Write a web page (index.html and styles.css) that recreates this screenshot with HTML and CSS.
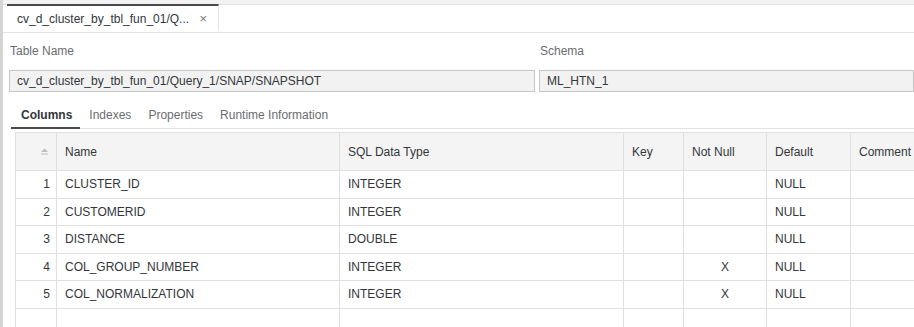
FILE: index.html
```html
<!DOCTYPE html>
<html>
<head>
	<title>Table Definition</title>
	<link rel="stylesheet" href="styles.css">
</head>
<body>
<div class="app">
  <div class="splitter"></div>
  <div class="main">
    <div class="strip"></div>
    <div class="tabbar">
      <div class="tab">
        <span>cv_d_cluster_by_tbl_fun_01/Q...</span>
        <a class="close">&#215;</a>
      </div>
    </div>
    <div class="form">
      <div class="field wide">
        <label>Table Name</label>
        <div class="input">cv_d_cluster_by_tbl_fun_01/Query_1/SNAP/SNAPSHOT</div>
      </div>
      <div class="field">
        <label>Schema</label>
        <div class="input">ML_HTN_1</div>
      </div>
    </div>
    <div class="subtabs">
      <a class="on">Columns</a>
      <a>Indexes</a>
      <a>Properties</a>
      <a>Runtime Information</a>
    </div>
    <div class="grid">
      <table>
        <colgroup>
          <col style="width:41px"><col style="width:283px"><col style="width:284px"><col style="width:60px"><col style="width:83px"><col style="width:84px"><col style="width:84px">
        </colgroup>
        <thead>
          <tr>
            <th class="num"><svg width="9" height="8" viewBox="0 0 9 8"><path d="M4.5 0.5 L8 4 L1 4 Z" fill="#bdbdbd"/><rect x="1" y="5.5" width="7" height="1" fill="#bdbdbd"/></svg></th>
            <th>Name</th><th>SQL Data Type</th><th>Key</th><th>Not Null</th><th>Default</th><th>Comment</th>
          </tr>
        </thead>
        <tbody>
          <tr><td class="num">1</td><td>CLUSTER_ID</td><td>INTEGER</td><td></td><td class="x"></td><td>NULL</td><td></td></tr>
          <tr><td class="num">2</td><td>CUSTOMERID</td><td>INTEGER</td><td></td><td class="x"></td><td>NULL</td><td></td></tr>
          <tr><td class="num">3</td><td>DISTANCE</td><td>DOUBLE</td><td></td><td class="x"></td><td>NULL</td><td></td></tr>
          <tr><td class="num">4</td><td>COL_GROUP_NUMBER</td><td>INTEGER</td><td></td><td class="x">X</td><td>NULL</td><td></td></tr>
          <tr><td class="num">5</td><td>COL_NORMALIZATION</td><td>INTEGER</td><td></td><td class="x">X</td><td>NULL</td><td></td></tr>
          <tr><td class="num"></td><td></td><td></td><td></td><td class="x"></td><td></td><td></td></tr>
        </tbody>
      </table>
    </div>
  </div>
</div>
</body>
</html>
```
FILE: styles.css
```css
html,body{margin:0;padding:0;}
body{
  font-family: "Liberation Sans", Arial, sans-serif;
  font-size: 12px;
  color: #32363a;
  background: #fff;
  overflow: hidden;
}
.app{
  display: flex;
  height: 327px;
}
.splitter{
  width: 3px;
  background: #d4d4d4;
  flex: none;
}
.main{
  flex: 1;
  min-width: 0;
}
.strip{
  height: 4px;
  background: #f2f2f2;
  border-bottom: 1px solid #e2e2e2;
}
.tabbar{
  height: 27px;
  border-bottom: 1px solid #e4e4e4;
  padding-left: 4px;
  display: flex;
}
.tab{
  width: 201px;
  border-top: 2px solid #4a4a4a;
  border-right: 1px solid #e4e4e4;
  padding-left: 10px;
  display: flex;
  align-items: center;
  height: 25px;
  margin-top: -1px;
}
.tab span{
  flex: 1;
}
.close{
  color: #777;
  font-size: 13px;
  margin-right: 11px;
}
.form{
  display: flex;
  gap: 4px;
  padding: 11px 0 0 6px;
}
.field{
  flex: 1;
  display: flex;
  flex-direction: column;
}
.field.wide{
  flex: none;
  width: 526px;
}
.field label{
  color: #6a6d70;
  padding-left: 1px;
  height: 26px;
}
.input{
  height: 20px;
  line-height: 20px;
  border: 1px solid #c6c6c6;
  background: #f2f2f2;
  padding-left: 7px;
  white-space: nowrap;
}
.subtabs{
  margin: 10px 0 0 8px;
  display: flex;
  border-bottom: 1px solid #e2e2e2;
  height: 26px;
}
.subtabs a{
  color: #6a6d70;
  padding: 6px 8px 0 9px;
}
.subtabs a.on{
  color: #32363a;
  font-weight: bold;
  padding: 6px 8px 0 10px;
  border-bottom: 2px solid #4a4a4a;
  margin-bottom: -1px;
}
.grid{
  margin: 3px 0 0 12px;
  overflow: hidden;
}
table{
  border-collapse: collapse;
  table-layout: fixed;
  width: 919px;
}
th, td{
  border: 1px solid #e0e0e0;
  text-align: left;
  font-weight: normal;
  padding: 0 0 0 8px;
  white-space: nowrap;
}
th{
  height: 37px;
  background: #f4f4f4;
}
td{
  height: 26.5px;
}
th.num, td.num{
  text-align: right;
  padding: 0 6px 0 0;
}
th.num svg{
  vertical-align: middle;
  margin-right: 1px;
}
td.x{
  text-align: center;
  padding: 0;
}
```
